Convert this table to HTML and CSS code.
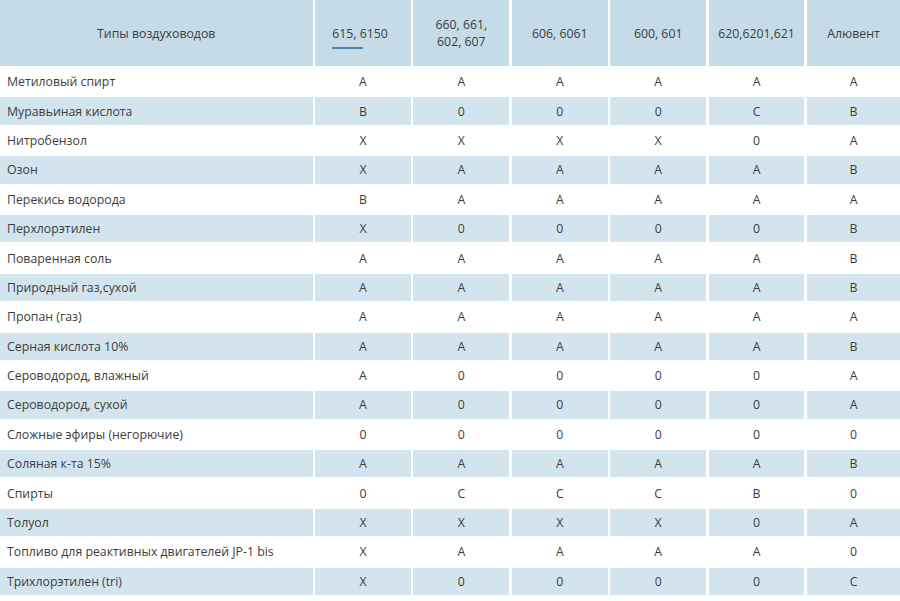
FILE: index.html
```html
<!DOCTYPE html>
<html lang="ru">
<head>
<meta charset="utf-8">
<title>Химическая стойкость воздуховодов</title>
<link rel="stylesheet" href="styles.css">
</head>
<body>
<div class="table">
  <div class="row head">
    <div class="cell name">Типы воздуховодов</div>
    <div class="cell"><span class="active">615, 6150</span></div>
    <div class="cell">660, 661,<br>602, 607</div>
    <div class="cell">606, 6061</div>
    <div class="cell">600, 601</div>
    <div class="cell">620,6201,621</div>
    <div class="cell">Алювент</div>
  </div>
  <div class="row"><div class="cell name">Метиловый спирт</div><div class="cell">A</div><div class="cell">A</div><div class="cell">A</div><div class="cell">A</div><div class="cell">A</div><div class="cell">A</div></div>
  <div class="row alt"><div class="cell name">Муравьиная кислота</div><div class="cell">B</div><div class="cell">0</div><div class="cell">0</div><div class="cell">0</div><div class="cell">C</div><div class="cell">B</div></div>
  <div class="row"><div class="cell name">Нитробензол</div><div class="cell">X</div><div class="cell">X</div><div class="cell">X</div><div class="cell">X</div><div class="cell">0</div><div class="cell">A</div></div>
  <div class="row alt"><div class="cell name">Озон</div><div class="cell">X</div><div class="cell">A</div><div class="cell">A</div><div class="cell">A</div><div class="cell">A</div><div class="cell">B</div></div>
  <div class="row"><div class="cell name">Перекись водорода</div><div class="cell">B</div><div class="cell">A</div><div class="cell">A</div><div class="cell">A</div><div class="cell">A</div><div class="cell">A</div></div>
  <div class="row alt"><div class="cell name">Перхлорэтилен</div><div class="cell">X</div><div class="cell">0</div><div class="cell">0</div><div class="cell">0</div><div class="cell">0</div><div class="cell">B</div></div>
  <div class="row"><div class="cell name">Поваренная соль</div><div class="cell">A</div><div class="cell">A</div><div class="cell">A</div><div class="cell">A</div><div class="cell">A</div><div class="cell">B</div></div>
  <div class="row alt"><div class="cell name">Природный газ,сухой</div><div class="cell">A</div><div class="cell">A</div><div class="cell">A</div><div class="cell">A</div><div class="cell">A</div><div class="cell">B</div></div>
  <div class="row"><div class="cell name">Пропан (газ)</div><div class="cell">A</div><div class="cell">A</div><div class="cell">A</div><div class="cell">A</div><div class="cell">A</div><div class="cell">A</div></div>
  <div class="row alt"><div class="cell name">Серная кислота 10%</div><div class="cell">A</div><div class="cell">A</div><div class="cell">A</div><div class="cell">A</div><div class="cell">A</div><div class="cell">B</div></div>
  <div class="row"><div class="cell name">Сероводород, влажный</div><div class="cell">A</div><div class="cell">0</div><div class="cell">0</div><div class="cell">0</div><div class="cell">0</div><div class="cell">A</div></div>
  <div class="row alt"><div class="cell name">Сероводород, сухой</div><div class="cell">A</div><div class="cell">0</div><div class="cell">0</div><div class="cell">0</div><div class="cell">0</div><div class="cell">A</div></div>
  <div class="row"><div class="cell name">Сложные эфиры (негорючие)</div><div class="cell">0</div><div class="cell">0</div><div class="cell">0</div><div class="cell">0</div><div class="cell">0</div><div class="cell">0</div></div>
  <div class="row alt"><div class="cell name">Соляная к-та 15%</div><div class="cell">A</div><div class="cell">A</div><div class="cell">A</div><div class="cell">A</div><div class="cell">A</div><div class="cell">B</div></div>
  <div class="row"><div class="cell name">Спирты</div><div class="cell">0</div><div class="cell">C</div><div class="cell">C</div><div class="cell">C</div><div class="cell">B</div><div class="cell">0</div></div>
  <div class="row alt"><div class="cell name">Толуол</div><div class="cell">X</div><div class="cell">X</div><div class="cell">X</div><div class="cell">X</div><div class="cell">0</div><div class="cell">A</div></div>
  <div class="row"><div class="cell name">Топливо для реактивных двигателей JP-1 bis</div><div class="cell">X</div><div class="cell">A</div><div class="cell">A</div><div class="cell">A</div><div class="cell">A</div><div class="cell">0</div></div>
  <div class="row alt"><div class="cell name">Трихлорэтилен (tri)</div><div class="cell">X</div><div class="cell">0</div><div class="cell">0</div><div class="cell">0</div><div class="cell">0</div><div class="cell">C</div></div>
</div>
</body>
</html>
```
FILE: styles.css
```css
html, body {
  margin: 0;
  padding: 0;
  background: #ffffff;
}
body {
  font-family: "Open Sans", "Noto Sans", sans-serif;
  font-size: 12.3px;
  color: #3d3d3d;
  overflow: hidden;
}
.table {
  display: flex;
  flex-direction: column;
  gap: 2px;
  width: 900px;
}
.row {
  display: grid;
  grid-template-columns: 312.5px repeat(5, 95.8px) 1fr;
  column-gap: 2.6px;
  height: 27.4px;
}
.row.head {
  height: 66px;
}
.cell {
  display: flex;
  align-items: center;
  justify-content: center;
  text-align: center;
  line-height: 19px;
  white-space: nowrap;
}
.cell.name {
  justify-content: flex-start;
  padding-left: 7px;
}
.head .cell {
  background: #c5dbe8;
  line-height: 17px;
}
.head .cell.name {
  justify-content: center;
  padding-left: 0;
}
.alt .cell {
  background: #d3e4ee;
}
.active {
  position: relative;
  margin-right: 6px;
}
.active::after {
  content: "";
  position: absolute;
  left: 0;
  top: 22px;
  width: 31px;
  height: 2.6px;
  background: #4c87a7;
}
```
